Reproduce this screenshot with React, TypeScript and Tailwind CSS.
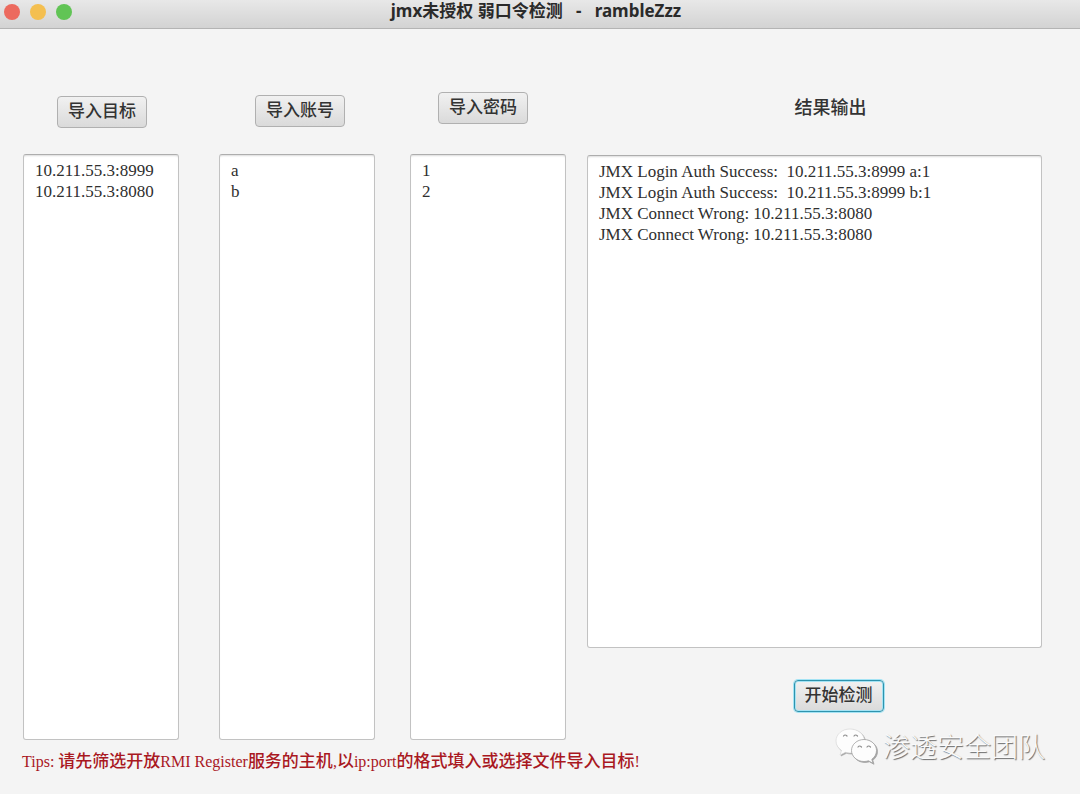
import React from 'react'

type ImportColumnProps = {
  id: string
  label: string
  value: string
  className: string
  headerClassName: string
}

const buttonBase =
  'h-8 shrink-0 rounded-[4px] border bg-linear-to-b from-[#f1f1f1] to-[#dadada] px-[10px] text-[17px] leading-[30px] font-medium text-[#333] whitespace-nowrap'

const areaBase =
  'block w-full min-h-40 resize-none rounded-[3px] border border-[#c2c2c2] border-t-[#adadad] bg-white px-[11px] py-[5px] text-[17px] leading-[21px] text-[#2f2f2f] shadow-[inset_0_2px_2px_-1px_#dcdcdc] outline-none'

const ImportColumn = ({ id, label, value, className, headerClassName }: ImportColumnProps) => {
  return (
    <div className={`flex flex-col ${className}`}>
      <div className={`flex ${headerClassName}`}>
        <button type="button" className={`${buttonBase} border-[#b0b0b0]`}>
          {label}
        </button>
      </div>
      <textarea id={id} aria-label={label} defaultValue={value} spellCheck={false} className={`${areaBase} flex-1`} />
    </div>
  )
}

const WeChatIcon = () => (
  <svg viewBox="0 0 44 36" className="h-9 w-11 drop-shadow-[1px_1px_0_#a4a4a4]" fill="#fdfdfd" aria-hidden="true">
    <path
      d="M15 1C7 1 1 6.300 1 13c0 4 2 7 5.500 9.500L5 27l5.500-2.700c1.500.4 3 .7 4.500.7C23 25 29.500 19.700 29.500 13S23 1 15 1z"
      stroke="#d4d4d4"
      strokeWidth=".6"
    />
    <path
      d="M29 11.500c-7 0-12.500 5-12.500 11s5.500 11 12.500 11c1.500 0 3-.3 4.500-.7l4.500 2.500-1.200-4c3-2.200 4.700-5.300 4.700-8.800 0-6-5.500-11-12.500-11z"
      stroke="#a0a0a0"
      strokeWidth=".8"
    />
    <g fill="none" stroke="#8f8f8f" strokeWidth="1.200" strokeLinecap="round">
      <path d="M8.500 8q1.500-2 3.500 0M19 8q1.500-2 3.500 0M23 19q1.500-2 3.500 0M32 19q1.500-2 3.500 0" />
    </g>
  </svg>
)

const App = () => {
  return (
    <div className="relative flex min-h-screen flex-col bg-[#f4f4f4] font-['Liberation_Serif','Noto_Sans_CJK_SC',serif]">
      <header className="flex h-[29px] items-start border-b border-[#b4b4b4] bg-linear-to-b from-[#e8e8e8] to-[#d3d3d3] pr-3 pl-1">
        <div className="flex flex-1 gap-[10px] pt-1">
          <button type="button" aria-label="Close" className="size-4 rounded-full bg-[#ec6a5e]" />
          <button type="button" aria-label="Minimize" className="size-4 rounded-full bg-[#f4bf50]" />
          <button type="button" aria-label="Zoom" className="size-4 rounded-full bg-[#61c455]" />
        </div>
        <h1 className="whitespace-pre font-['Noto_Sans','Noto_Sans_CJK_SC',sans-serif] text-[17px] leading-[22px] font-bold text-[#2a2a2a]">
          jmx未授权 弱口令检测   -   rambleZzz
        </h1>
        <div className="flex-1" />
      </header>

      <main className="flex flex-1 pr-[38px] pl-[23px]">
        <ImportColumn
          id="targets"
          label="导入目标"
          value={'10.211.55.3:8999\n10.211.55.3:8080'}
          className="mr-10 flex-[156] gap-[26px] pt-[67px]"
          headerClassName="pl-[34px]"
        />
        <ImportColumn
          id="accounts"
          label="导入账号"
          value={'a\nb'}
          className="mr-[35px] flex-[156] gap-[27px] pt-[66px]"
          headerClassName="pl-9"
        />
        <ImportColumn
          id="passwords"
          label="导入密码"
          value={'1\n2'}
          className="mr-[21px] flex-[156] gap-[30px] pt-[63px]"
          headerClassName="pl-7"
        />
        <section className="flex flex-[455] flex-col pt-[63px] pb-7">
          <label htmlFor="output" className="mb-[31px] pl-8 text-center text-lg leading-8 font-medium text-[#333]">
            结果输出
          </label>
          <textarea
            id="output"
            readOnly
            spellCheck={false}
            className={`${areaBase} flex-1`}
            defaultValue={
              'JMX Login Auth Success:  10.211.55.3:8999 a:1\nJMX Login Auth Success:  10.211.55.3:8999 b:1\nJMX Connect Wrong: 10.211.55.3:8080\nJMX Connect Wrong: 10.211.55.3:8080'
            }
          />
          <div className="mt-8 flex justify-center pl-12">
            <button type="button" className={`${buttonBase} border-[#2f93ad] shadow-[0_0_0_1px_#a4e3f4,inset_0_0_0_1px_#a4e3f4]`}>
              开始检测
            </button>
          </div>
        </section>
      </main>

      <footer className="h-[54px] pt-[10px] pl-[22px]">
        {/* the Chinese runs are set one size up from the Latin ones */}
        <p className="text-base leading-6 text-[#a9181f]">
          Tips: <span className="text-[17px] font-medium">请先筛选开放</span>RMI Register
          <span className="text-[17px] font-medium">服务的主机</span>,<span className="text-[17px] font-medium">以</span>ip:port
          <span className="text-[17px] font-medium">的格式填入或选择文件导入目标</span>!
        </p>
      </footer>

      <div className="absolute right-[35px] bottom-7 flex items-center gap-1">
        <WeChatIcon />
        <span className="font-['Noto_Sans_CJK_SC',sans-serif] text-[27px] leading-10 font-light text-[#fafafa] [text-shadow:1px_1px_1px_#666]">
          渗透安全团队
        </span>
      </div>
    </div>
  )
}

export default App
